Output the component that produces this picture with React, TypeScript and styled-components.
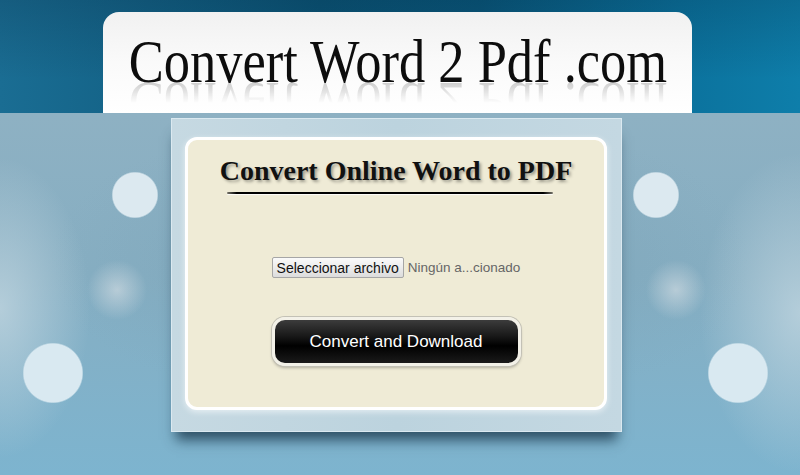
import React from 'react';
import styled, { createGlobalStyle } from 'styled-components';

const GlobalStyle = createGlobalStyle`
  html, body {
    margin: 0;
    padding: 0;
  }
  body {
    font-family: "Liberation Sans", Arial, sans-serif;
    background: #7fb3cc;
  }
`;

const Page = styled.div`
  width: 800px;
  height: 475px;
  display: flex;
  flex-direction: column;
  overflow: hidden;
`;

const TopBand = styled.header`
  height: 113px;
  flex: none;
  display: flex;
  justify-content: center;
  align-items: flex-end;
  padding-right: 5px;
  box-sizing: border-box;
  background:
    linear-gradient(180deg, rgba(0, 20, 40, 0.18) 0%, rgba(0, 20, 40, 0) 70%),
    linear-gradient(90deg, #1a6d93 0%, #0b5577 40%, #09587c 60%, #0b729d 85%, #0e7eaa 100%);
`;

const HeaderCard = styled.div`
  width: 589px;
  height: 101px;
  box-sizing: border-box;
  border-radius: 16px 16px 0 0;
  background: linear-gradient(180deg, #f1f1f1 0%, #fafafa 50%, #ffffff 100%);
  display: flex;
  justify-content: center;
  padding-top: 20px;
  overflow: hidden;
`;

const SiteTitle = styled.h1`
  margin: 0;
  font-family: "Liberation Serif", "Times New Roman", serif;
  font-weight: normal;
  font-size: 61px;
  line-height: 60px;
  height: 60px;
  color: #0d0d0d;
  white-space: nowrap;
  transform: scaleX(0.86);
  -webkit-box-reflect: below -19px linear-gradient(transparent 50%, rgba(255, 255, 255, 0.28));
`;

const Bokeh = styled.main`
  flex: 1;
  display: flex;
  justify-content: center;
  align-items: flex-start;
  padding-top: 5px;
  padding-right: 7px;
  box-sizing: border-box;
  background:
    radial-gradient(circle at 135px 82px, #dce9f0 22px, rgba(220, 233, 240, 0) 23.5px),
    radial-gradient(circle at 656px 82px, #dce9f0 22px, rgba(220, 233, 240, 0) 23.5px),
    radial-gradient(circle at 53px 260px, #d9e9f1 29px, rgba(217, 233, 241, 0) 30.5px),
    radial-gradient(circle at 738px 260px, #d9e9f1 29px, rgba(217, 233, 241, 0) 30.5px),
    radial-gradient(circle 30px at 117px 177px, rgba(200, 214, 222, 0.75) 0%, rgba(200, 214, 222, 0) 100%),
    radial-gradient(circle 30px at 676px 177px, rgba(200, 214, 222, 0.75) 0%, rgba(200, 214, 222, 0) 100%),
    radial-gradient(ellipse 90px 150px at 0px 195px, rgba(200, 218, 227, 0.7) 0%, rgba(200, 218, 227, 0) 100%),
    radial-gradient(ellipse 100px 160px at 800px 200px, rgba(200, 218, 227, 0.7) 0%, rgba(200, 218, 227, 0) 100%),
    radial-gradient(ellipse 180px 120px at 230px 150px, rgba(120, 160, 180, 0.3) 0%, rgba(120, 160, 180, 0) 100%),
    radial-gradient(ellipse 160px 120px at 590px 150px, rgba(120, 160, 180, 0.3) 0%, rgba(120, 160, 180, 0) 100%),
    linear-gradient(180deg, #8eb1c3 0%, #86aec2 45%, #7db4cf 100%);
`;

const Panel = styled.section`
  width: 451px;
  height: 314px;
  box-sizing: border-box;
  padding: 18px 14px 21px 13px;
  display: flex;
  background: linear-gradient(90deg, #c6d9e2 0%, #bcd3de 50%, #c4d8e2 100%);
  border: 1px solid #dbe9f0;
  box-shadow: 0 13px 12px -5px rgba(25, 55, 75, 0.8);
`;

const Card = styled.div`
  flex: 1;
  display: flex;
  flex-direction: column;
  align-items: center;
  background: #efebd6;
  border: 3px solid #ffffff;
  border-radius: 12px;
  box-shadow: 0 2px 6px rgba(255, 255, 255, 0.6);
`;

const Heading = styled.h2`
  margin: 15px 0 0;
  font-family: "Liberation Serif", "Times New Roman", serif;
  font-weight: bold;
  font-size: 28px;
  line-height: 32px;
  color: #111;
  text-shadow: 2px 2px 3px rgba(0, 0, 0, 0.35);
`;

const Rule = styled.div`
  width: 326px;
  height: 2px;
  margin: 5px 12px 0 0;
  border-radius: 1px;
  background: linear-gradient(90deg, rgba(0, 0, 0, 0.5) 0%, #000 3%, #000 97%, rgba(0, 0, 0, 0.5) 100%);
  box-shadow: 0 1px 1px rgba(255, 255, 255, 0.9);
`;

const FileRow = styled.div`
  margin-top: 63px;
  display: flex;
  align-items: center;
  gap: 4px;
  font-family: "Liberation Sans", Arial, sans-serif;
  font-size: 14px;
`;

const PickButton = styled.button`
  height: 21px;
  padding: 0 4px;
  font-family: inherit;
  font-size: 14px;
  color: #111;
  background: linear-gradient(180deg, #fafafa 0%, #ececec 50%, #dcdcdc 100%);
  border: 1px solid #a6a6a6;
  border-radius: 2px;
`;

const FileName = styled.span`
  font-size: 13.5px;
  color: #666;
`;

const ConvertButton = styled.button`
  margin-top: 39px;
  width: 249px;
  height: 49px;
  box-sizing: border-box;
  border: 3px solid #f3f1e8;
  border-radius: 13px;
  box-shadow: 0 0 0 1px #c3c1b6, 0 2px 3px rgba(0, 0, 0, 0.25);
  background: linear-gradient(180deg, #3c3c3c 0%, #161616 40%, #000 60%, #1a1a1a 100%);
  color: #fff;
  font-family: "Liberation Sans", Arial, sans-serif;
  font-size: 17px;
`;

export default function App() {
  return (
    <>
      <GlobalStyle />
      <Page>
        <TopBand>
          <HeaderCard>
            <SiteTitle>Convert Word 2 Pdf .com</SiteTitle>
          </HeaderCard>
        </TopBand>
        <Bokeh>
          <Panel>
            <Card>
              <Heading>Convert Online Word to PDF</Heading>
              <Rule />
              <FileRow>
                <PickButton type="button">Seleccionar archivo</PickButton>
                <FileName>Ningún a...cionado</FileName>
              </FileRow>
              <ConvertButton type="button">Convert and Download</ConvertButton>
            </Card>
          </Panel>
        </Bokeh>
      </Page>
    </>
  );
}
